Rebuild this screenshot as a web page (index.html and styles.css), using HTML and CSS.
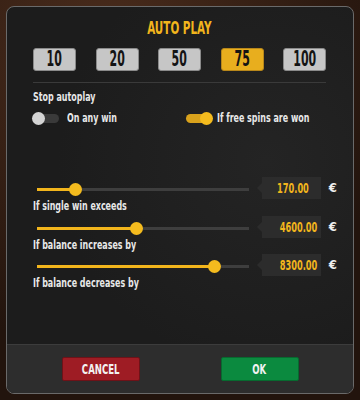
FILE: index.html
```html
<!DOCTYPE html>
<html lang="en">
<head>
<meta charset="UTF-8">
<meta name="viewport" content="width=device-width, initial-scale=1.0">
<title>Auto Play</title>
<link rel="stylesheet" href="styles.css">
</head>
<body>
    <div class="panel">
        <div class="content">
            <h1 class="title"><span class="sq">AUTO PLAY</span></h1>

            <!-- spin count chips -->
            <div class="chips">
                <button class="chip"><span class="sq">10</span></button>
                <button class="chip"><span class="sq">20</span></button>
                <button class="chip"><span class="sq">50</span></button>
                <button class="chip active"><span class="sq">75</span></button>
                <button class="chip"><span class="sq">100</span></button>
            </div>
            <div class="separator"></div>

            <p class="section-label"><span class="sq left">Stop autoplay</span></p>
            <div class="toggles">
                <div class="toggle-item">
                    <span class="toggle"><span class="knob"></span></span>
                    <span class="sq left">On any win</span>
                </div>
                <div class="toggle-item">
                    <span class="toggle on"><span class="knob"></span></span>
                    <span class="sq left">If free spins are won</span>
                </div>
            </div>

            <!-- limit sliders -->
            <div class="limits">
                <div class="limit">
                    <div class="limit-main">
                        <div class="track"><div class="fill" style="width: 18%"><span class="thumb"></span></div></div>
                        <div class="limit-label"><span class="sq left">If single win exceeds</span></div>
                    </div>
                    <div class="value"><span class="sq right">170.00</span></div>
                    <span class="currency">€</span>
                </div>
                <div class="limit">
                    <div class="limit-main">
                        <div class="track"><div class="fill" style="width: 46.7%"><span class="thumb"></span></div></div>
                        <div class="limit-label"><span class="sq left">If balance increases by</span></div>
                    </div>
                    <div class="value"><span class="sq right">4600.00</span></div>
                    <span class="currency">€</span>
                </div>
                <div class="limit">
                    <div class="limit-main">
                        <div class="track"><div class="fill" style="width: 83.5%"><span class="thumb"></span></div></div>
                        <div class="limit-label"><span class="sq left">If balance decreases by</span></div>
                    </div>
                    <div class="value"><span class="sq right">8300.00</span></div>
                    <span class="currency">€</span>
                </div>
            </div>
        </div>

        <div class="footer">
            <button class="btn cancel"><span class="sq">CANCEL</span></button>
            <button class="btn ok"><span class="sq">OK</span></button>
        </div>
    </div>
</body>
</html>
```

FILE: styles.css
```css
body, html {
    margin: 0;
    width: 360px;
    height: 400px;
    overflow: hidden;
}
body {
    background: radial-gradient(circle at 30% 10%, #4a2c1c, #22140d 70%);
    font-family: "DejaVu Sans Condensed", "DejaVu Sans", sans-serif;
    font-weight: bold;
    color: #e8e8e8;
    padding: 6px;
    box-sizing: border-box;
}
/* the game font is very narrow, squeeze the condensed face to match */
.sq {
    display: inline-block;
    white-space: nowrap;
    transform: scaleX(0.68);
}
.sq.left {
    transform-origin: left center;
}
.sq.right {
    transform-origin: right center;
}
.panel {
    height: 388px;
    box-sizing: border-box;
    border: 1px solid #6a6a6a;
    border-radius: 8px;
    background: radial-gradient(circle at 75% 40%, #242424, #1c1c1c 60%);
    display: flex;
    flex-direction: column;
    overflow: hidden;
}
.content {
    flex: 1;
    padding: 11px 27px 0 26px;
}
.title {
    margin: 0;
    text-align: center;
    font-size: 17px;
    line-height: 20px;
    color: #f2b51c;
}
.chips {
    display: flex;
    justify-content: space-between;
    margin-top: 10px;
}
.chip {
    width: 43px;
    height: 23px;
    padding: 0;
    border: 1px solid #8a8a8a;
    border-radius: 3px;
    background: #c6c6c6;
    color: #141414;
    font-family: inherit;
    font-weight: bold;
    font-size: 21px;
    line-height: 21px;
}
.chip .sq {
    transform: scaleX(0.58);
}
.chip.active {
    background: #e8ae1e;
    border-color: #b8871a;
}
.separator {
    height: 1px;
    background: #3a3a3a;
    margin-top: 11px;
}
.section-label {
    margin: 7px 0 0;
    font-size: 13px;
    line-height: 14px;
}
.toggles {
    display: grid;
    grid-template-columns: 153px auto;
    margin-top: 7px;
    font-size: 13px;
    line-height: 14px;
}
.toggle-item {
    display: flex;
    align-items: center;
    gap: 8px;
}
.toggle-item + .toggle-item {
    gap: 5px;
}
.toggle {
    position: relative;
    flex: none;
    width: 26px;
    height: 9px;
    border-radius: 5px;
    background: #3a3a3a;
}
.toggle .knob {
    position: absolute;
    left: -1px;
    top: -2px;
    width: 13px;
    height: 13px;
    border-radius: 50%;
    background: #d4d4d4;
}
.toggle.on {
    background: #d9a21c;
}
.toggle.on .knob {
    left: auto;
    right: -1px;
    background: #f4bb1e;
}
.limits {
    margin-top: 56px;
    margin-right: -11px;
}
.limit {
    display: flex;
    align-items: flex-start;
    height: 38.5px;
}
.limit-main {
    flex: 1;
}
.track {
    height: 3px;
    margin: 7px 0 0 4px;
    background: #3e3e3e;
}
.fill {
    position: relative;
    height: 100%;
    background: #f2b51c;
}
.thumb {
    position: absolute;
    top: -5px;
    right: -7px;
    width: 13px;
    height: 13px;
    border-radius: 50%;
    background: #f4bb1e;
}
.limit-label {
    margin-top: 8px;
    font-size: 13px;
    line-height: 14px;
}
.value {
    position: relative;
    width: 59px;
    height: 22px;
    margin: -4px 0 0 13px;
    box-sizing: border-box;
    padding-right: 15px;
    background: #2c2c2c;
    color: #f2b51c;
    font-size: 13.5px;
    line-height: 22px;
    text-align: right;
}
.value::before {
    content: "";
    position: absolute;
    left: -5px;
    top: 6px;
    border-style: solid;
    border-width: 5px 5px 5px 0;
    border-color: transparent #2c2c2c transparent transparent;
}
.currency {
    width: 16px;
    margin-top: 0;
    text-align: right;
    font-size: 13px;
    line-height: 14px;
    color: #f0f0f0;
}
.footer {
    height: 49px;
    box-sizing: border-box;
    border-top: 1px solid #3c3c3c;
    background: #2d2d2d;
    display: flex;
    align-items: center;
    justify-content: center;
    gap: 81px;
}
.btn {
    width: 78px;
    height: 24px;
    padding: 0;
    border-radius: 2px;
    color: #f2f2f2;
    font-family: inherit;
    font-weight: bold;
    font-size: 14px;
}
.btn.cancel {
    background: #9e1c24;
    border: 1px solid #6e1218;
}
.btn.ok {
    background: #0b8a3f;
    border: 1px solid #076a2f;
}
```
